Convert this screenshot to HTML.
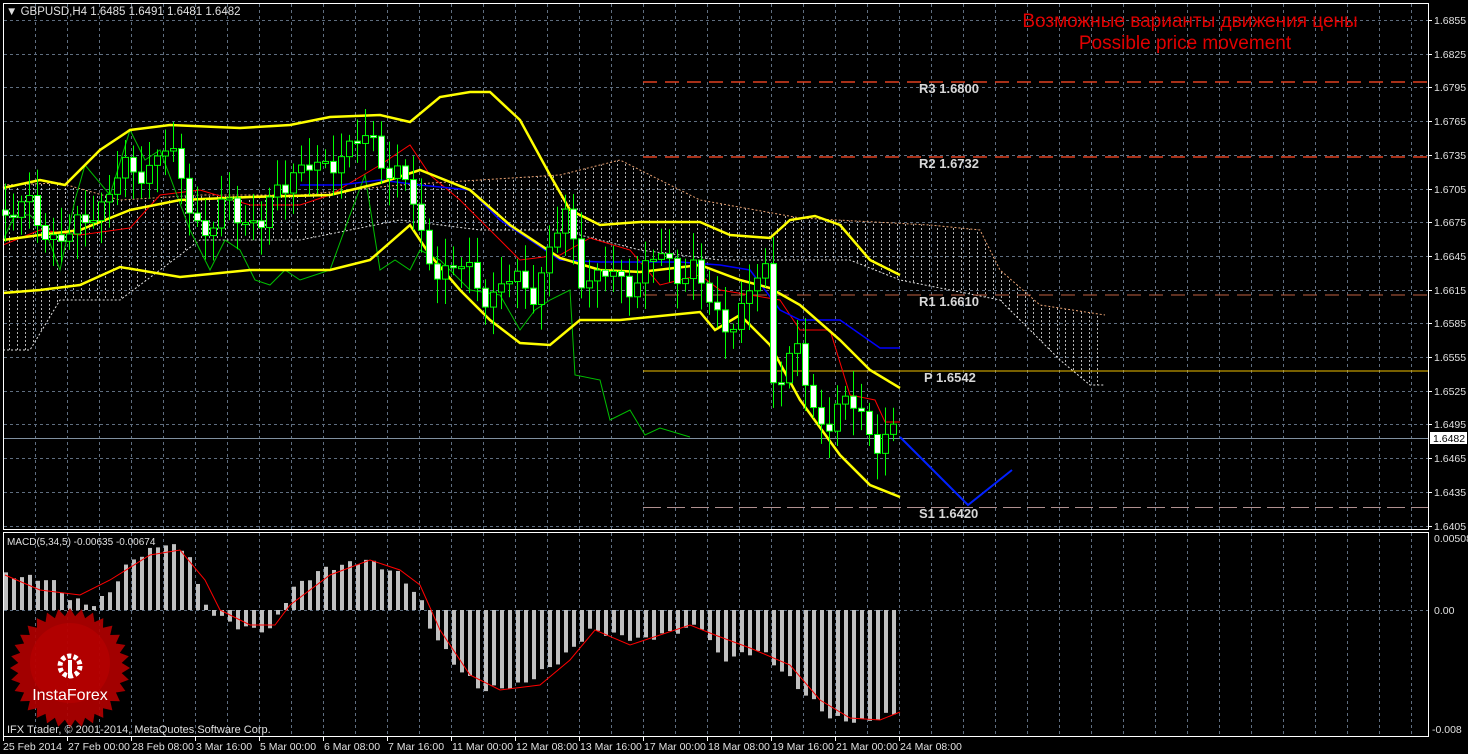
<!DOCTYPE html>
<html><head><meta charset="utf-8"><style>
html,body{margin:0;padding:0;background:#000;width:1468px;height:754px;overflow:hidden}
svg{display:block}
text{font-family:"Liberation Sans",sans-serif}
</style></head><body>
<svg id="s" width="1468" height="754" xmlns="http://www.w3.org/2000/svg">
<defs>
<pattern id="hatch" width="8" height="4" patternUnits="userSpaceOnUse"><line x1="1.5" y1="0" x2="1.5" y2="2" stroke="#e0e0e0" stroke-width="1"/></pattern>
</defs>
<rect width="1468" height="754" fill="#000"/>
<g id="grid"></g>
<g id="cloud"></g>
<g id="lvl"></g>
<g id="ind"></g>
<g id="cand"></g>
<g id="macd"></g>
<rect x="3.5" y="3.5" width="1425" height="526" fill="none" stroke="#fff"/>
<rect x="3.5" y="532.5" width="1425" height="204" fill="none" stroke="#fff"/>
<text x="6" y="15" font-size="11.5" fill="#e0e0e0">▼ GBPUSD,H4  1.6485 1.6491 1.6481 1.6482</text>
<text x="1190" y="27" font-size="19" fill="#e00000" text-anchor="middle">Возможные варианты движения цены</text>
<text x="1185" y="49" font-size="19" fill="#e00000" text-anchor="middle">Possible price movement</text>
<text x="7" y="545" font-size="10" fill="#e0e0e0">MACD(5,34,5) -0.00635 -0.00674</text>
<g id="logo" transform="translate(70,668)"></g>
<text x="7" y="733" font-size="11" fill="#e0e0e0">IFX Trader, © 2001-2014, MetaQuotes Software Corp.</text>
<g id="axis"></g>
</svg>
<script>
const NS="http://www.w3.org/2000/svg";
function el(p,t,a){const e=document.createElementNS(NS,t);for(const k in a)e.setAttribute(k,a[k]);document.getElementById(p).appendChild(e);return e;}
function txt(p,x,y,s,a){const e=el(p,'text',Object.assign({x:x,y:y},a));e.textContent=s;return e;}
function pts(a){return a.map(p=>p.join(',')).join(' ');}
function interp(a,x){for(let i=0;i<a.length-1;i++){if(x>=a[i][0]&&x<=a[i+1][0]){const t=(x-a[i][0])/(a[i+1][0]-a[i][0]);return a[i][1]+t*(a[i+1][1]-a[i][1]);}}return a[a.length-1][1];}
const gc="#5f6e80";
for(let x=35;x<1428;x+=32){el('grid','line',{x1:x+.5,y1:4,x2:x+.5,y2:529,stroke:gc,'stroke-dasharray':'3,3'});el('grid','line',{x1:x+.5,y1:533,x2:x+.5,y2:736,stroke:gc,'stroke-dasharray':'3,3'});}
for(let i=0;i<16;i++){const y=Math.round(20+33.7*i);el('grid','line',{x1:4,y1:y+.5,x2:1428,y2:y+.5,stroke:gc,'stroke-dasharray':'3,3'});
 el('axis','line',{x1:1428,y1:y+.5,x2:1432,y2:y+.5,stroke:'#fff'});
 txt('axis',1434,y+4,(1.6855-0.003*i).toFixed(4),{'font-size':10.5,fill:'#e0e0e0'});}
el('grid','line',{x1:4,y1:610.5,x2:1428,y2:610.5,stroke:gc,'stroke-dasharray':'3,3'});
txt('axis',1434,542,'0.00508',{'font-size':10.5,fill:'#e0e0e0'});
txt('axis',1434,614,'0.00',{'font-size':10.5,fill:'#e0e0e0'});
txt('axis',1432,733,'-0.008',{'font-size':10.5,fill:'#e0e0e0'});
const tl=["25 Feb 2014","27 Feb 00:00","28 Feb 08:00","3 Mar 16:00","5 Mar 00:00","6 Mar 08:00","7 Mar 16:00","11 Mar 00:00","12 Mar 08:00","13 Mar 16:00","17 Mar 00:00","18 Mar 08:00","19 Mar 16:00","21 Mar 00:00","24 Mar 08:00"];
tl.forEach((s,i)=>{const x=3+64*i;el('axis','line',{x1:x+.5,y1:737,x2:x+.5,y2:741,stroke:'#fff'});txt('axis',x+(i?1:0),750,s,{'font-size':10.5,fill:'#e0e0e0'});});
const cu=[[3,185],[60,183],[120,200],[200,195],[300,195],[400,185],[480,180],[560,175],[620,160],[700,200],[800,218],[930,225],[980,230],[1000,270],[1040,305],[1105,315]];
const cl=[[3,350],[30,350],[60,300],[120,300],[200,240],[300,240],[400,220],[480,230],[560,230],[640,250],[720,260],[850,260],[900,280],[1000,300],[1060,360],[1090,385],[1105,385]];
el('cloud','polygon',{points:pts(cu.concat(cl.slice().reverse())),fill:'url(#hatch)',opacity:.8});
el('cloud','polyline',{points:pts(cu),fill:'none',stroke:'#e8a070','stroke-dasharray':'2,2'});
el('cloud','polyline',{points:pts(cl),fill:'none',stroke:'#e0e0e0','stroke-dasharray':'2,2'});
el('lvl','line',{x1:643,y1:82,x2:1428,y2:82,stroke:'#e04020','stroke-dasharray':'14,8','stroke-width':1.5});
el('lvl','line',{x1:643,y1:157,x2:1428,y2:157,stroke:'#e04020','stroke-dasharray':'14,8','stroke-width':1.5});
el('lvl','line',{x1:643,y1:295,x2:1428,y2:295,stroke:'#c06040','stroke-dasharray':'14,8'});
el('lvl','line',{x1:643,y1:371,x2:1428,y2:371,stroke:'#f0c000'});
el('lvl','line',{x1:643,y1:507.5,x2:1428,y2:507.5,stroke:'#b09090','stroke-dasharray':'18,6'});
el('lvl','line',{x1:4,y1:438.5,x2:1428,y2:438.5,stroke:'#8090a0'});
el('axis','rect',{x:1430,y:432,width:37,height:12,fill:'#fff'});
txt('axis',1433,442,'1.6482',{'font-size':10.5,fill:'#000'});
[["R3 1.6800",919,93],["R2 1.6732",919,168],["R1 1.6610",919,306],["P 1.6542",924,382],["S1 1.6420",919,518]].forEach(a=>txt('lvl',a[1],a[2],a[0],{'font-size':13,'font-weight':'bold',fill:'#d8d8d8','font-family':'Liberation Mono,monospace'}));
const up=[[3,188],[40,180],[65,185],[100,150],[130,130],[170,125],[240,128],[290,125],[330,117],[380,115],[410,122],[440,97],[470,92],[490,92],[520,120],[550,175],[570,210],[600,225],[640,222],[700,222],[730,235],[770,238],[790,220],[815,216],[840,225],[870,260],[900,275]];
const md=[[3,240],[40,235],[80,230],[130,210],[180,200],[250,197],[330,195],[380,183],[420,170],[470,190],[510,225],[560,258],[600,270],[640,272],[700,265],[740,280],[770,288],[800,305],[840,340],[870,370],[900,388]];
const lo=[[3,293],[40,290],[80,285],[120,267],[180,277],[250,270],[330,270],[370,260],[410,225],[430,255],[460,290],[490,320],[520,343],[550,345],[580,320],[620,320],[700,312],[715,330],[740,315],[770,345],[800,400],[840,455],[870,485],[900,497]];
const gr=[[3,240],[15,215],[30,215],[45,230],[60,270],[75,200],[85,165],[110,195],[130,130],[145,160],[160,150],[175,190],[190,230],[210,270],[225,240],[240,250],[255,280],[270,285],[285,270],[300,280],[315,275],[330,270],[350,215],[365,175],[380,270],[395,260],[410,270],[420,250],[440,260],[470,290],[500,295],[520,330],[535,310],[550,300],[570,290],[575,375],[600,380],[610,420],[630,410],[645,435],[660,428],[690,437]];
const rd=[[3,245],[40,230],[80,235],[130,228],[160,195],[200,190],[250,205],[300,205],[330,195],[380,165],[410,145],[430,175],[460,200],[490,230],[520,260],[560,255],[590,238],[630,250],[660,285],[700,275],[720,290],[750,295],[780,300],[800,330],[830,330],[850,395],[875,400],[885,422],[900,422]];
const bl=[[300,185],[340,185],[380,180],[420,185],[470,190],[500,220],[560,260],[600,262],[640,262],[680,262],[720,265],[750,270],[780,310],[800,320],[840,320],[880,348],[900,348]];
el('ind','polyline',{points:pts(rd),fill:'none',stroke:'#ff0000'});
el('ind','polyline',{points:pts(bl),fill:'none',stroke:'#0000ff','stroke-width':1.5});
el('ind','polyline',{points:pts(gr),fill:'none',stroke:'#00c000'});
[up,md,lo].forEach(a=>el('ind','polyline',{points:pts(a),fill:'none',stroke:'#ffff00','stroke-width':2.5}));
el('ind','polyline',{points:'900,437 968,505 1012,470',fill:'none',stroke:'#0020ff','stroke-width':2});
const cp=[[5,210],[40,215],[80,245],[100,205],[130,180],[170,150],[200,200],[215,240],[240,200],[270,230],[300,160],[330,180],[350,140],[380,150],[410,170],[430,250],[460,270],[500,290],[540,285],[575,220],[590,270],[620,285],[660,265],[700,265],[720,320],[750,310],[775,270],[780,370],[810,350],[815,420],[850,405],[880,430],[900,437]];
let prev=interp(cp,5);
for(let x=5;x<=900;x+=8){
 const c=interp(cp,x+8)+(Math.sin(x*1.7)*14+Math.cos(x*0.53)*8);
 const o=prev; prev=c;
 const t=Math.min(o,c),b=Math.max(o,c);
 const hi=t-5-Math.abs(Math.sin(x*0.9))*22, lw=b+5+Math.abs(Math.cos(x*1.3))*22;
 el('cand','line',{x1:x+.5,y1:hi,x2:x+.5,y2:lw,stroke:'#00ff00'});
 el('cand','rect',{x:x-2.5,y:t,width:6,height:Math.max(2,b-t),fill:c>o?'#fff':'#000',stroke:'#00ff00'});
}
const mh=[[5,575],[50,580],[70,600],[95,605],[110,590],[130,560],[165,543],[190,555],[200,600],[215,615],[240,628],[270,630],[290,590],[320,570],[365,560],[400,575],[420,600],[428,625],[450,660],[480,690],[520,685],[560,660],[590,630],[640,640],[700,625],[720,660],[760,650],[800,690],[830,718],[860,722],[900,712]];
for(let x=5;x<=900;x+=8){const y=interp(mh,x)+Math.sin(x*2.1)*3;el('macd','rect',{x:x-1,y:Math.min(y,610),width:4,height:Math.abs(y-610),fill:'#c0c0c0'});}
const ms=[[5,575],[40,590],[80,595],[110,580],[150,555],[180,550],[205,580],[220,610],[250,625],[275,625],[290,605],[330,575],[370,560],[400,570],[420,585],[440,630],[470,675],[500,690],[540,685],[570,660],[595,630],[630,645],[690,625],[715,635],[750,648],[790,665],[820,700],[850,718],[880,720],[900,712]];
el('macd','polyline',{points:pts(ms),fill:'none',stroke:'#ff0000'});
let star=[];for(let i=0;i<64;i++){const r=i%2?52:60;const a=i*Math.PI/32;star.push([(r*Math.cos(a)).toFixed(1),(r*Math.sin(a)).toFixed(1)]);}
el('logo','polygon',{points:pts(star),fill:'#b00000',opacity:.92});
el('logo','circle',{cx:0,cy:-5,r:40,fill:'#c00000',opacity:.5});
el('logo','circle',{cx:0,cy:-2,r:10,fill:'none',stroke:'#fff','stroke-width':5,'stroke-dasharray':'4,2.3'});
el('logo','rect',{x:-2,y:-8,width:4,height:18,fill:'#fff'});
txt('logo',0,32,'InstaForex',{'font-size':16,fill:'#fff','text-anchor':'middle'});
</script>
</body></html>
